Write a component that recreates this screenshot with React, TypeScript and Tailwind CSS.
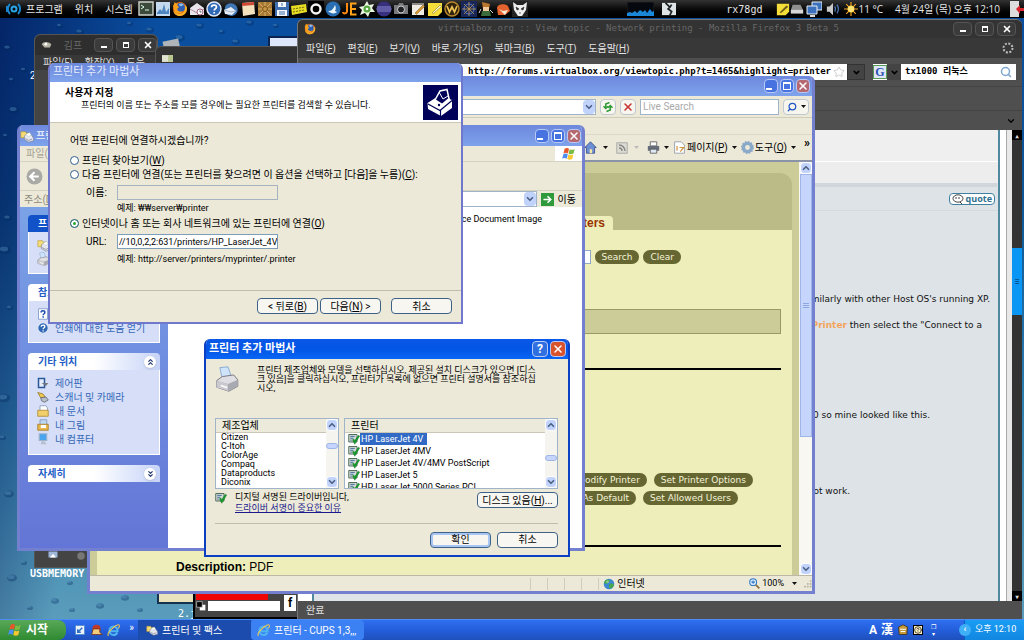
import type { ReactNode } from "react";
import { FiHelpCircle } from "react-icons/fi";
import { LuChevronDown, LuChevronUp, LuSearch, LuStar, LuX } from "react-icons/lu";

/* ---------- Small drawings ---------- */

function Svg({ size = 16, children }: { size?: number; children: ReactNode }) {
  return (
    <svg width={size} height={size} viewBox="0 0 16 16" className="shrink-0" aria-hidden="true">
      {children}
    </svg>
  );
}

/** Solid drop-down triangle used on the toolbars. */
const Caret = ({ dim = false }: { dim?: boolean }) => (
  <svg width="5" height="3" viewBox="0 0 5 3" className="shrink-0" aria-hidden="true">
    <path d="M0 0h5L2.500 3z" fill={dim ? "#bbb" : "#111"} />
  </svg>
);

const FirefoxIcon = ({ size = 16 }: { size?: number }) => (
  <Svg size={size}>
    <circle cx="8" cy="8" r="7" fill="#e8680e" />
    <circle cx="8.500" cy="6.500" r="4.600" fill="#2f5fb5" />
    <path d="M7 3c2-1 4-.5 5 1-1.500 0-2 1-3 1.200S7 4.500 7 3z" fill="#8fc0ee" />
    <path d="M1 5c1-2 1.500-3 1.500-4 1 1 2 1.500 3.500 1.500C5 4 5.500 5 7 6c-1 1-2 1.500-1.500 3S9 11 11 10c-1.500 3-6 3.500-8.500 1z" fill="#f7a01c" />
    <path d="M14.800 6c1 5-3 9-7 9C4 15 2 12.500 1.300 10c3 4 9 4 11 0 1-2 .8-4 .2-6z" fill="#f5b52a" />
  </Svg>
);

const IeIcon = ({ size = 14 }: { size?: number }) => (
  <Svg size={size}>
    <path d="M3.500 9h9.500c.3-3.500-2-6-5-6S3 5.400 3 8.200s2 5.300 5 5.300c2 0 3.800-1 4.600-3" fill="none" stroke="#4fb4f2" strokeWidth="2.600" />
    <path d="M2 14.500c-2-1 0-5 4-8.500s8-5.600 9-4.500-.5 3-1 4" fill="none" stroke="#f2c84b" strokeWidth="1.300" />
  </Svg>
);

const FlagIcon = ({ size = 14 }: { size?: number }) => (
  <Svg size={size}>
    <path d="M3 2c2-1.300 3.600-1 5 0L6.800 7.300C5.300 6.400 3.700 6.400 1.700 7.400z" fill="#e8562a" />
    <path d="M8.700 2.500c1.500 1 3.300 1 5.800-.3L13.200 7.500c-2 1.200-4 1.200-5.700.2z" fill="#7cbb42" />
    <path d="M1.500 8.300c2-1 3.600-1 5.100-.1L5.400 13.300c-1.500-.9-3.300-.8-5.200.2z" fill="#4b8df0" />
    <path d="M7.300 8.700c1.800 1 3.600 1 5.700-.1l-1.300 5.200c-2 1.100-4 1.100-5.600 0z" fill="#f7c82f" />
  </Svg>
);

const PrinterIcon = ({ size = 24 }: { size?: number }) => (
  <Svg size={size}>
    <path d="M3 1l5-.5 2 6L4.500 8z" fill="#cfe4fb" stroke="#7ba0cf" strokeWidth=".5" />
    <path d="M1 9l3.500-2.500 7-1 2.500 3v4L8.500 15.500 1 13z" fill="#dfdfe3" stroke="#77777f" strokeWidth=".6" />
    <path d="M1 9l7 2 6-2.500v4L8.500 15.500 1 13z" fill="#a9a9b1" />
    <path d="M1 9l7 2v4.300L1 13z" fill="#c9c9cf" />
    <path d="M3.500 12l4 1.300" stroke="#fafafa" fill="none" />
  </Svg>
);

const PrinterFolderIcon = ({ size = 14 }: { size?: number }) => (
  <Svg size={size}>
    <path d="M1 3h5l1 1.500h4V10H1z" fill="#f5dc75" stroke="#b58f22" strokeWidth=".6" />
    <path d="M5 8l2-2 6 .5 2.500 4v3L10 15l-5-3z" fill="#e6e7ee" stroke="#72778b" strokeWidth=".7" />
    <path d="M6 11l4 2 4-1.500" stroke="#8b90a3" fill="none" />
    <path d="M7 6l4-2 2 3-4 1.500z" fill="#fff" stroke="#8aa" strokeWidth=".4" />
  </Svg>
);

const SignedIcon = () => (
  <Svg size={12}>
    <path d="M1 2h11v10H1z" fill="#d5dad5" stroke="#4e6b57" strokeWidth="1.300" />
    <path d="M3 4.500h6M3 7h4M3 9.500h2" stroke="#3d6d9c" strokeWidth="1.300" />
    <path d="M6 9l3 6 6.500-11-1.500-1-5 7-1.500-2z" fill="#17a02f" stroke="#0b6a1c" strokeWidth=".6" />
  </Svg>
);

const GlobeIcon = ({ size = 12 }: { size?: number }) => (
  <Svg size={size}>
    <circle cx="8" cy="8" r="7" fill="#3d86d2" />
    <path d="M3 3c3-2 5-1 6 0S7 6 6 7 2 8 1.500 7zM9 8c2-1 5-1 5.500 1s-3 5-5 5-2-5-.5-6z" fill="#48a84c" />
    <circle cx="6" cy="5" r="2" fill="#fff" opacity=".35" />
  </Svg>
);

const HelpBall = ({ size = 14 }: { size?: number }) => (
  <Svg size={size}>
    <circle cx="8" cy="8" r="7" fill="#2f68b4" stroke="#dfe9f8" strokeWidth="1.500" />
    <path d="M5.500 6.300C5.500 3.300 10.500 3.400 10.500 6c0 1.800-2.300 1.600-2.300 3.600M8.200 11v1.600" stroke="#fff" strokeWidth="1.700" fill="none" />
  </Svg>
);

const HelpPage = () => (
  <Svg size={12}>
    <path d="M2 1h12v14H2z" fill="#fff" stroke="#6f8fc4" />
    <path d="M5.500 6C5.500 3 10.500 3 10.500 6c0 1.800-2.300 1.600-2.300 3.600M8.200 11v2" stroke="#1f4fae" strokeWidth="2" fill="none" />
  </Svg>
);

/* launchers in the top panel, in order */
const launchers: ReactNode[] = [
  <Svg key="term"><path d="M1 1h14v13H1z" fill="#3c4a3c" stroke="#cfd3cb" strokeWidth="1.400" /><path d="M3 4l3 2-3 2M7 9h4" stroke="#dfe" fill="none" /></Svg>,
  <Svg key="mon"><path d="M1 1h14v14H1z" fill="#c5daee" /><path d="M2 12l3-4 2 2 2-7 2 8 3-4v6H2z" fill="#4e87c0" /></Svg>,
  <FirefoxIcon key="ff" />,
  <Svg key="mail"><path d="M1 7l7-5 7 5v7H1z" fill="#e9e5ea" /><path d="M1 8l7 4 7-4" stroke="#b08fa0" fill="none" /><circle cx="11" cy="11" r="3" fill="#fff" stroke="#a05a80" /><path d="M11 9.500V11h1.500" stroke="#555" fill="none" /></Svg>,
  <HelpBall key="help" size={16} />,
  <Svg key="tb"><path d="M2 6c1-4 9-6 12 0 2 5-1 8-5 9-5 0-8-4-7-9z" fill="#4176b5" /><path d="M1 9l7-3 5 4-4 4-7-1z" fill="#e9eef5" /><path d="M1 9l7 2 5-1" stroke="#9fb4cc" fill="none" /></Svg>,
  <Svg key="note"><path d="M2 2l12-1 1 12-12 2z" fill="#f3e2bd" /><path d="M2 2l12-1v3L2 5z" fill="#cf4a35" /></Svg>,
  <Svg key="box"><path d="M1 1h14v14H1z" fill="#a87a35" /><path d="M2 2l12 12M14 2L2 14M8 1v14M1 8h14" stroke="#d9b266" /><circle cx="8" cy="8" r="2.500" fill="#c79646" stroke="#7d561d" /></Svg>,
  <Svg key="floppy"><path d="M1 1h14v14H1z" fill="#3f6fae" /><path d="M4 1h8v5H4zM3 9h10v6H3z" fill="#f4f7fb" /><path d="M8 2v3M5 11h6M5 13h6" stroke="#3f6fae" /></Svg>,
  <Svg key="easy"><path d="M0 5l15-2 1 8-15 3z" fill="#e9dc25" /><path d="M2 8l12-2M2 11l11-2" stroke="#6c6a10" strokeDasharray="2 1" /></Svg>,
  <Svg key="ring"><path d="M0 0h16v16H0z" fill="#000" /><circle cx="8" cy="8" r="4.500" stroke="#f4f4f4" strokeWidth="2.400" fill="none" /></Svg>,
  <Svg key="bird"><circle cx="8" cy="8" r="7.500" fill="#2a6fb3" /><path d="M3 10c3 0 5-1 7-6 1 2 1 4 0 6l2 1c-2 2-6 2-9-1z" fill="#eef5fb" /></Svg>,
  <Svg key="je"><path d="M5 2v8c0 3-4 3-4 1" stroke="#ff8a12" strokeWidth="2" fill="none" /><path d="M14.500 2.500H9v11h5.500M9 8h5" stroke="#ffa21a" strokeWidth="2" fill="none" /></Svg>,
  <Svg key="splat"><path d="M8 0l2 4 5-1-2 4 3 4-5 0-2 5-3-4-5 2 2-5-3-3 5-1z" fill="#e9f5df" /><circle cx="8" cy="8" r="3.500" fill="#54a83d" /><circle cx="8" cy="8" r="1.300" fill="#fff" /></Svg>,
  <Svg key="eclipse"><circle cx="8" cy="8" r="7.500" fill="#37307f" /><path d="M1 6h14M.5 8h15M1 10h14" stroke="#8d86cf" /></Svg>,
  <Svg key="cam"><path d="M1 4h4l1-2h4l1 2h4v9H1z" fill="#77797b" /><circle cx="8" cy="8.500" r="3.500" fill="#222" stroke="#cfd2d4" /></Svg>,
  <Svg key="edit"><path d="M2 2h12v12H2z" fill="#efece4" /><path d="M2 2h12v2H2z" fill="#8d8a83" /><path d="M5 12l8-8 1.500 1.500-8 8z" fill="#d99a35" stroke="#805a1f" strokeWidth=".5" /></Svg>,
  <Svg key="sticky"><path d="M1 2h14v9l-4 4H1z" fill="#f5de3a" /><path d="M5 12l8-8 1.500 1.500-8 7z" fill="#fff9d5" stroke="#a08b1d" strokeWidth=".7" /></Svg>,
  <Svg key="wow"><circle cx="8" cy="8" r="7" fill="#31230d" stroke="#b6862c" strokeWidth="1.500" /><path d="M3 5l2.500 6L8 6l2.500 5L13 5" stroke="#efc455" strokeWidth="1.700" fill="none" /></Svg>,
  <Svg key="sc"><path d="M0 0h16v16H0z" fill="#182658" /><circle cx="8" cy="8" r="5" fill="none" stroke="#5678c8" /><path d="M8 1v14M1 8h14M3 3l10 10M13 3L3 13" stroke="#c29a54" strokeWidth=".8" /></Svg>,
  <Svg key="dude"><path d="M4 1l8 2-1 5H5z" fill="#b9762e" /><path d="M5 6h6v4H5z" fill="#f2caa0" /><path d="M4 10h8l1 5H3z" fill="#3a6b3d" /><path d="M3 8l-2 4M12 9l3 3" stroke="#d9d9d9" /></Svg>,
  <Svg key="fox"><path d="M2 7c0-4 8-5 11-2l2 5-5 4H3z" fill="#e3622d" /><path d="M4 8l4 2 5-1-3 5z" fill="#f8e6d7" /></Svg>,
  <Svg key="mask"><path d="M0 0h16v16H0z" fill="#222" /><path d="M1 1l4 3h6l4-3-1 8-4 6H6L2 9z" fill="#eee" /><path d="M4 6l3 2-2 1zM12 6L9 8l2 1zM7 12h2" fill="#222" stroke="#222" strokeWidth=".6" /></Svg>,
];

/* ---------- Shared pieces ---------- */

/** Label with its access key underlined in brackets. */
const Key = ({ text, k, after = "" }: { text: string; k: string; after?: string }) => (
  <>
    {text}(<span className="underline">{k}</span>){after}
  </>
);

function CaptionButton({ kind, active = false }: { kind: "min" | "max" | "close" | "help"; active?: boolean }) {
  const color = kind === "close" ? (active ? "bg-[#d9532c]" : "bg-[#b5686f]") : active ? "bg-[#2f6fe0]" : "bg-[#4673e0]";
  return (
    <button
      type="button"
      aria-label={kind}
      className={`${color} ${active ? "h-4 w-4" : "h-3.5 w-3.5"} flex items-center justify-center rounded-sm border border-[#b9c9f5] text-white`}
    >
      {kind === "min" && <span className="mt-1.5 mr-1 h-0.5 w-1.5 bg-white" />}
      {kind === "max" && <span className="h-2 w-2 border border-t-2 border-white" />}
      {kind === "close" && <LuX size={12} strokeWidth={3} />}
      {kind === "help" && <span className="text-xs leading-none font-bold">?</span>}
    </button>
  );
}

function DarkCaptionButtons() {
  return (
    <div className="flex gap-[3px] text-white">
      <button type="button" aria-label="min" className="flex h-3.5 w-[19px] items-center justify-center rounded-sm border border-[#555] bg-[#3b3b3b]">
        <span className="mt-1 h-0.5 w-1.5 bg-white" />
      </button>
      <button type="button" aria-label="max" className="flex h-3.5 w-[19px] items-center justify-center rounded-sm border border-[#555] bg-[#3b3b3b]">
        <span className="h-1.5 w-1.5 border border-t-2 border-white" />
      </button>
      <button type="button" aria-label="close" className="flex h-3.5 w-[19px] items-center justify-center rounded-sm border border-[#555] bg-[#3b3b3b]">
        <LuX size={10} strokeWidth={4} />
      </button>
    </div>
  );
}

const ComboArrow = () => (
  <button type="button" aria-label="open" className="flex h-full w-3 items-center justify-center rounded-sm bg-[#c1d3fb] text-[#4d6185]">
    <LuChevronDown size={10} strokeWidth={4} />
  </button>
);

const ScrollArrow = ({ up = false }: { up?: boolean }) => (
  <button type="button" aria-label="scroll" className="flex h-3 w-3 shrink-0 items-center justify-center rounded-sm border border-white bg-[#c1d3fb] text-[#4d6185]">
    {up ? <LuChevronUp size={10} strokeWidth={4} /> : <LuChevronDown size={10} strokeWidth={4} />}
  </button>
);

const XpButton = ({ children, wide = "w-[61px]", focus = false }: { children: ReactNode; wide?: string; focus?: boolean }) => (
  <button
    type="button"
    className={`${wide} ${focus ? "shadow-[inset_0_0_0_2px_#a9c5f2]" : ""} flex h-4 items-center justify-center rounded-sm border border-[#3d6288] bg-[#f7f6f1] whitespace-pre`}
  >
    {children}
  </button>
);

/* ---------- Windows ---------- */

function TopPanel() {
  return (
    <header className="flex h-[18px] shrink-0 items-center overflow-hidden bg-linear-to-b from-[#333] via-[#0b0b0b] to-black font-['Open_Sans','Noto_Sans_CJK_KR',sans-serif] text-[10px] whitespace-nowrap text-[#e6e6e6]">
      <nav className="flex w-[138px] shrink-0 items-center pl-1.5">
        <Svg>
          <circle cx="8" cy="8" r="2.500" fill="none" stroke="#2aa5e8" strokeWidth="2" />
          <path d="M4 3a7 7 0 000 10M12 3a7 7 0 010 10M1 5v6" stroke="#1a86cf" strokeWidth="2" fill="none" />
        </Svg>
        <a href="#programs" className="ml-1">프로그램</a>
        <a href="#places" className="ml-3">위치</a>
        <a href="#system" className="ml-3">시스템</a>
      </nav>
      <div className="flex gap-px">{launchers}</div>
      <div className="ml-auto flex items-center">
        <svg width="27" height="14" viewBox="0 0 27 14" className="mr-2">
          <path d="M0 0h27v14H0z" fill="#05080f" stroke="#222" />
          <path d="M0 14v-3l3-1 2 1 3-2 2 2 3-3 3 2 2-2 2 3 3-4 2 3 2-1v5z" fill="#1b87d8" />
        </svg>
        <Svg size={14}><path d="M0 1h16v14H0z" fill="#dfe5e6" /><path d="M4 1l5 5-2 2 4 3-2 4M11 3l-2 3" stroke="#1d2225" strokeWidth="2" fill="none" /></Svg>
        <span className="mr-3.5 ml-[50px] font-['DejaVu_Sans_Mono',monospace]">rx78gd</span>
        <Svg size={14}><path d="M1 2h14v9l-4 4H1z" fill="#f5de3a" /><path d="M4 12l8-8 2 1.500-8 7z" fill="#6a5c17" /></Svg>
        <Svg size={14}><path d="M3 3h9l3 6v4H1V9z" fill="#8f8f8f" /><path d="M1 9h14v4H1z" fill="#d6d6d6" /></Svg>
        <span className="w-0.5" />
        <Svg><path d="M6 1h10v8H6z" fill="#3c72bd" stroke="#e9eef5" /><path d="M1 5h10v8H1z" fill="#3c72bd" stroke="#e9eef5" /><path d="M4 15h5" stroke="#ddd" strokeWidth="2" /></Svg>
        <span className="w-1" />
        <Svg size={14}><path d="M1 5h3l4-4v14l-4-4H1z" fill="#c9c9c9" /><path d="M10 5c1 2 1 4 0 6M12.500 3c2 3 2 7 0 10" stroke="#4a76b3" strokeWidth="1.500" fill="none" /></Svg>
        <span className="w-1" />
        <Svg size={14}><circle cx="8" cy="8" r="4" fill="#ffd94a" /><path d="M8 0v16M0 8h16M2.500 2.500l11 11M13.500 2.500l-11 11" stroke="#f7a823" strokeWidth="1.300" /><circle cx="8" cy="8" r="3.500" fill="#ffe476" /></Svg>
        <span className="mr-3">11 °C</span>
        <time>4월 24일 (목) 오후 12:10</time>
        <span className="w-2" />
        <Svg><path d="M2 0h9v16H2z" fill="#ddd" /><path d="M8 8l4-4v3h4v3h-4v3z" fill="#d8262e" /></Svg>
      </div>
    </header>
  );
}

function FirefoxWindow() {
  return (
    <section className="absolute top-px right-0.5 bottom-0 left-[297px] flex flex-col overflow-hidden rounded-t-md border-t border-l border-[#777] bg-[#4f4f4f] font-['DejaVu_Sans_Mono','Noto_Sans_CJK_KR',monospace] text-[10px] text-[#e4e4e4]">
      <div className="flex h-[18px] shrink-0 items-center bg-[#333] pr-1.5 pl-1.5">
        <FirefoxIcon size={12} />
        <h2 className="flex-1 truncate pl-2 text-center text-[9px] text-[#666]">virtualbox.org :: View topic - Network printing - Mozilla Firefox 3 Beta 5</h2>
        <DarkCaptionButtons />
      </div>
      <nav className="flex h-5 shrink-0 items-center gap-3 bg-[#383838] px-2 font-['Open_Sans','Noto_Sans_CJK_KR',sans-serif] whitespace-nowrap">
        <span><Key text="파일" k="F" /></span>
        <span><Key text="편집" k="E" /></span>
        <span><Key text="보기" k="V" /></span>
        <span><Key text="바로 가기" k="S" /></span>
        <span><Key text="북마크" k="B" /></span>
        <span><Key text="도구" k="T" /></span>
        <span><Key text="도움말" k="H" /></span>
        <svg width="12" height="12" viewBox="0 0 12 12" className="ml-auto">
          <circle cx="6" cy="6" r="4.500" fill="none" stroke="#bbb" strokeWidth="2" strokeDasharray="2 1.500" />
        </svg>
      </nav>
      <div className="flex h-7 shrink-0 items-center pr-1.5">
        <div className="ml-40 flex h-4 flex-1 items-center bg-white">
          <input
            aria-label="URL"
            defaultValue="http://forums.virtualbox.org/viewtopic.php?t=1465&highlight=printer"
            className="min-w-0 flex-1 pl-2.5 text-[9px] font-bold text-black"
          />
          <LuStar size={12} className="mr-0.5 text-[#ccc]" />
        </div>
        <button type="button" aria-label="history" className="mr-2 flex h-4 w-[18px] items-center justify-center border border-[#333] bg-[#444] text-black">
          <LuChevronDown size={9} strokeWidth={4} />
        </button>
        <div className="flex h-4 w-[143px] items-center bg-white">
          <span className="flex h-3.5 w-3.5 items-center justify-center border border-[#5a9a5a] bg-[#dfe7f7] font-['Liberation_Serif',serif] text-xs font-bold text-[#2b52b5]">G</span>
          <button type="button" aria-label="engine" className="flex h-4 w-3.5 items-center justify-center bg-[#444] text-black">
            <LuChevronDown size={9} strokeWidth={4} />
          </button>
          <input aria-label="search" defaultValue="tx1000 리눅스" className="min-w-0 flex-1 pl-1 text-[9px] font-bold text-black" />
          <LuSearch size={12} strokeWidth={3} className="mr-1 text-[#7fa6cf]" />
        </div>
      </div>
      <div className="h-6 shrink-0 border-t border-[#444]" />
      <div className="flex h-5 shrink-0 items-center justify-end border-t border-[#444] pr-1.5 text-black">
        <LuChevronDown size={10} strokeWidth={3} />
      </div>
      <div className="flex min-h-0 flex-1 bg-white">
        <article className="ml-3.5 flex flex-1 flex-col border-x-2 border-[#5088a0] bg-[#dee3e7] font-['DejaVu_Sans',sans-serif] text-[9px] text-[#111]">
          <div className="h-8 border-b border-white bg-[#efefef]" />
          <div className="h-[21px] bg-[#ededed]" />
          <div className="mr-px h-1 bg-[#d0d6dc]" />
          <div className="flex h-6 items-center justify-end border-b border-[#d3d9dd] pr-[3px]">
            <button type="button" className="flex h-3 items-center gap-0.5 rounded-sm border border-[#3f7f9f] bg-white px-0.5 font-['Open_Sans',sans-serif] text-[9px] leading-[10px] font-bold text-[#2f6f8f]">
              <svg width="12" height="10" viewBox="0 0 12 10" aria-hidden="true">
                <ellipse cx="6" cy="4.500" rx="5" ry="3.700" fill="#fff" stroke="#444" />
                <path d="M4 3v2M7 3v2M8 8l2 2" stroke="#444" />
              </svg>
              quote
            </button>
          </div>
          <div className="flex flex-col items-end text-right leading-[12px] whitespace-nowrap">
            <p className="mt-[82px] pr-2">This should work similarly with other Host OS's running XP.</p>
            <p className="mt-3.5 pr-4"><b className="text-[#f2a45c]">Printer</b> then select the "Connect to a</p>
            <p className="mt-[78px] pr-[68px]">0 so mine looked like this.</p>
            <p className="mt-16 pr-[148px]">not work.</p>
          </div>
        </article>
        <div className="ml-1.5 w-1.5 border-l border-[#aaa] bg-[#e8e8e8]" />
        <div className="flex w-2.5 flex-col bg-[#333] text-[#ddd]">
          <span className="flex h-2.5 items-center justify-center bg-black text-[6px]">▲</span>
          <div className="mt-[108px] flex h-[67px] flex-col items-center justify-center gap-px bg-[#0a96f5]">
            <span className="h-px w-1 bg-[#06569a]" />
            <span className="h-px w-1 bg-[#06569a]" />
            <span className="h-px w-1 bg-[#06569a]" />
          </div>
          <span className="mt-auto flex h-2.5 items-center justify-center bg-black text-[6px]">▼</span>
        </div>
      </div>
      <footer className="flex h-[18px] shrink-0 items-center pl-2">완료</footer>
    </section>
  );
}

const OliveButton = ({ children }: { children: ReactNode }) => (
  <button type="button" className="h-3.5 rounded-full bg-[#666633] px-[7px] text-[9px] leading-[14px] text-[#f4f4d8]">
    {children}
  </button>
);

function IeWindow() {
  return (
    <section className="absolute top-[58px] left-[87px] flex h-[518px] w-[728px] flex-col overflow-hidden rounded-t-md border-x-3 border-b-3 border-[#7380d0] bg-[#ece9d8] text-[10px] whitespace-nowrap">
      <div className="flex h-5 shrink-0 items-center justify-end gap-0.5 bg-linear-to-b from-[#6d88dc] to-[#7ea3ec] pr-0.5">
        <CaptionButton kind="min" />
        <CaptionButton kind="max" />
        <CaptionButton kind="close" />
      </div>
      <div className="flex h-[22px] shrink-0 items-center gap-1 border-b border-[#cfccba] pr-[3px]">
        <div className="flex h-4 flex-1 items-center justify-end border border-[#9fb4c8] bg-white">
          <ComboArrow />
        </div>
        <button type="button" aria-label="refresh" className="flex h-4 w-4 items-center justify-center rounded-sm border border-[#bfc8d0] bg-[#f6f5ee]">
          <Svg size={12}><path d="M10 2L5 4v5M2 7l3 3 3-3M6 14l5-2V7M8 9l3-3 3 3" fill="none" stroke="#2f9a36" strokeWidth="2" /></Svg>
        </button>
        <button type="button" aria-label="stop" className="flex h-4 w-4 items-center justify-center rounded-sm border border-[#bfc8d0] bg-[#f6f5ee] text-[#c73232]">
          <LuX size={12} strokeWidth={3} />
        </button>
        <input aria-label="Live Search" placeholder="Live Search" className="h-4 w-[139px] border border-[#9fb4c8] bg-white pl-0.5 placeholder:text-[#aaa]" />
        <button type="button" aria-label="search" className="flex h-4 w-[26px] items-center justify-center gap-1 rounded-sm border border-[#bfc8d0] bg-[#f6f5ee] text-[#2258c4]">
          <LuSearch size={10} strokeWidth={3} className="-scale-x-100" />
          <Caret />
        </button>
      </div>
      <div className="h-[17px] shrink-0 border-b border-[#dcd9c8]" />
      <div className="flex h-[27px] shrink-0 items-center justify-end border-b-2 border-[#8b93a8] pr-0.5">
        <Svg size={13}><path d="M1 8l7-7 7 7h-2v7H3V8z" fill="#6f8fd4" stroke="#324a86" /><path d="M7 10h3v5H7z" fill="#f5e7a5" /></Svg>
        <span className="mr-2 ml-1.5"><Caret /></span>
        <Svg size={12}><path d="M1 1h14v14H1z" fill="#dcdcd2" stroke="#999" /><path d="M4 8a4 4 0 014 4M4 4a8 8 0 018 8" stroke="#888" strokeWidth="2" fill="none" /></Svg>
        <span className="mr-2 ml-1.5"><Caret dim /></span>
        <Svg size={13}><path d="M4 1h8v5H4z" fill="#fff" stroke="#555" /><path d="M1 6h14v6H1z" fill="#666e7c" /><path d="M4 10h8v5H4z" fill="#dfe8f5" stroke="#555" /></Svg>
        <span className="mr-1 ml-1"><Caret /></span>
        <Svg size={13}><path d="M2 1h8l4 4v10H2z" fill="#fff" stroke="#8b94a5" /><path d="M5 6v6M8 8h5l-4 5" stroke="#cf9640" strokeWidth="1.500" fill="none" /></Svg>
        <span className="ml-px"><Key text="페이지" k="P" /></span>
        <span className="mr-1 ml-1"><Caret /></span>
        <Svg size={13}><circle cx="8" cy="8" r="5" fill="none" stroke="#8aa9c9" strokeWidth="4" /><circle cx="8" cy="8" r="7" fill="none" stroke="#8aa9c9" strokeWidth="2" strokeDasharray="2 1.600" /></Svg>
        <span className="ml-px"><Key text="도구" k="O" /></span>
        <span className="mr-2 ml-1"><Caret /></span>
        <span className="self-start text-[12px] leading-4 font-bold">»</span>
      </div>
      <div className="flex min-h-0 flex-1 font-['DejaVu_Sans',sans-serif]">
        <div className="flex flex-1 flex-col bg-[#cccc99] pr-[7px] pl-[7px] pt-[11px]">
          <div className="flex h-[57px] shrink-0 items-end justify-end rounded-tr-xl bg-[#bbbb88] pr-[179px]">
            <h3 className="rounded-tr-sm bg-[#eeeebb] px-2 font-['Liberation_Sans',sans-serif] text-[12px] leading-[14px] font-bold text-[#993300]">Printers</h3>
          </div>
          <div className="flex flex-1 flex-col bg-[#eeeebb]">
            <div className="mt-5 flex items-center justify-end gap-1 pr-[111px]">
              <input aria-label="query" className="h-3.5 w-40 border border-[#8fa8c8] bg-white" />
              <OliveButton>Search</OliveButton>
              <OliveButton>Clear</OliveButton>
            </div>
            <div className="mt-[45px] mr-[11px] h-[25px] border border-[#999966] bg-[#cccc99]" />
            <hr className="mt-[34px] mr-[11px] border-t-2 border-black" />
            <div className="mt-[103px] flex justify-end gap-[7px] pr-[39px]">
              <OliveButton>Modify Printer</OliveButton>
              <OliveButton>Set Printer Options</OliveButton>
            </div>
            <div className="mt-1 flex justify-end gap-[7px] pr-[54px]">
              <OliveButton>Set As Default</OliveButton>
              <OliveButton>Set Allowed Users</OliveButton>
            </div>
            <hr className="mt-10 mr-[11px] border-t-2 border-black" />
            <p className="mt-3 pl-[79px] font-['Liberation_Sans',sans-serif] text-[12px] leading-4"><b>Description:</b> PDF</p>
          </div>
        </div>
        <div className="flex w-[13px] flex-col items-center bg-[#f8f7f2]">
          <ScrollArrow up />
          <div className="flex h-[263px] w-3 flex-col items-center justify-center gap-px border border-[#9fb5e8] bg-[#c5d5fc]">
            <span className="h-px w-1.5 bg-[#8ca8e0]" />
            <span className="h-px w-1.5 bg-[#8ca8e0]" />
            <span className="h-px w-1.5 bg-[#8ca8e0]" />
          </div>
          <div className="flex-1" />
          <ScrollArrow />
        </div>
      </div>
      <footer className="flex h-4 shrink-0 items-center justify-end border-t border-[#bbb8a8]">
        <span className="mr-4 h-3 w-px bg-[#d0cdbc]" />
        <span className="mr-4 h-3 w-px bg-[#d0cdbc]" />
        <span className="mr-4 h-3 w-px bg-[#d0cdbc]" />
        <span className="mr-4 h-3 w-px bg-[#d0cdbc]" />
        <span className="mr-1 h-3 w-px bg-[#d0cdbc]" />
        <GlobeIcon />
        <span className="ml-0.5 w-[132px]">인터넷</span>
        <Svg size={11}><circle cx="6" cy="6" r="5" fill="#d5e8fb" stroke="#2f78c4" strokeWidth="1.500" /><path d="M3.500 6h5M6 3.500v5" stroke="#2f78c4" strokeWidth="1.500" /><path d="M10 10l5 5" stroke="#8a6d3a" strokeWidth="2.500" /></Svg>
        <span className="ml-0.5 text-[9px]">100%</span>
        <span className="mr-1.5 ml-2"><Caret /></span>
        <Svg size={9}><path d="M12 2h3v3h-3zM12 7h3v3h-3zM12 12h3v3h-3zM7 7h3v3H7zM7 12h3v3H7zM2 12h3v3H2z" fill="#b8b4a2" /></Svg>
      </footer>
    </section>
  );
}

function SidePanel({ title, dark = false, open = true, height = "", children }: { title: string; dark?: boolean; open?: boolean; height?: string; children?: ReactNode }) {
  return (
    <div>
      <h3 className={`${dark ? "bg-[#1152c8] text-white" : "bg-linear-to-r from-white via-white to-[#c6d3f7] text-[#215dc6]"} flex h-[17px] items-center justify-between rounded-t-sm pr-1 pl-2.5 font-bold`}>
        {title}
        <button type="button" aria-label="toggle" className="flex h-3 w-3 flex-col items-center justify-center rounded-full bg-white text-[#22386f] shadow-sm">
          {open ? <LuChevronUp size={7} strokeWidth={4} /> : <LuChevronDown size={7} strokeWidth={4} />}
          {open ? <LuChevronUp size={7} strokeWidth={4} className="-mt-1" /> : <LuChevronDown size={7} strokeWidth={4} className="-mt-1" />}
        </button>
      </h3>
      {open && <div className={`${height} border border-t-0 border-white bg-[#d6dff7] px-2 pt-1.5 text-[#3567b8]`}>{children}</div>}
    </div>
  );
}

const places: { name: string; icon: ReactNode }[] = [
  { name: "제어판", icon: <Svg size={12}><path d="M2 2h8v12H2z" fill="#e4edf9" stroke="#285a9b" strokeWidth="2" /><path d="M6 8h9l-3 4z" fill="#72777f" /></Svg> },
  { name: "스캐너 및 카메라", icon: <Svg size={12}><path d="M1 2l7 2 3 4-6 1z" fill="#f2cb50" stroke="#8d6f1d" /><path d="M5 9l7-1 3 4-5 3-4-2z" fill="#b9bec8" stroke="#5b606c" /></Svg> },
  { name: "내 문서", icon: <Svg size={12}><path d="M4 1h8l2 3v6H4z" fill="#fff" stroke="#7b8fb5" /><path d="M1 7h14v8H1z" fill="#f1cf6b" stroke="#a88327" /></Svg> },
  { name: "내 그림", icon: <Svg size={12}><path d="M4 1h9v8H4z" fill="#bcd9f4" stroke="#7b8fb5" /><path d="M1 7h14v8H1z" fill="#e8b74a" stroke="#a07322" /><path d="M5 8h7v4H5z" fill="#fff" /></Svg> },
  { name: "내 컴퓨터", icon: <Svg size={12}><path d="M3 1h10v9H3z" fill="#4aa5ee" stroke="#9fb2cc" strokeWidth="1.500" /><path d="M6 11h4l3 4H5z" fill="#b5bfd0" /></Svg> },
];

function PrintersFolder() {
  return (
    <section className="absolute top-[107px] left-[17px] flex h-[426px] w-[568px] flex-col overflow-hidden rounded-t-md border-x-3 border-b-3 border-[#7380d0] bg-[#ece9d8] text-[10px] whitespace-nowrap">
      <div className="flex h-[21px] shrink-0 items-center gap-0.5 bg-linear-to-b from-[#6d88dc] to-[#7ea3ec] pr-px">
        <PrinterFolderIcon />
        <h2 className="flex-1 font-bold text-[#dfe7fb]">프린터 및 팩스</h2>
        <CaptionButton kind="min" />
        <CaptionButton kind="max" />
        <CaptionButton kind="close" />
      </div>
      <div className="flex h-4 shrink-0 items-center justify-between border-b border-[#d5d2c2] pl-1.5 text-[#a5a294]">
        <span><Key text="파일" k="F" /></span>
        <span className="flex h-full w-[27px] items-center justify-center bg-white"><FlagIcon /></span>
      </div>
      <div className="flex h-[29px] shrink-0 items-center border-b border-[#d5d2c2] pl-1.5">
        <Svg size={17}><circle cx="8" cy="8" r="7.500" fill="#a9a9a5" /><path d="M8 4L4 8l4 4M4 8h8" stroke="#fff" strokeWidth="2" fill="none" /></Svg>
      </div>
      <div className="flex h-4 shrink-0 items-center gap-1 pr-1.5 pl-1 text-[#8f8c80]">
        <span><Key text="주소" k="D" /></span>
        <div className="flex h-4 flex-1 items-center justify-end border border-[#9fb4c8] bg-white">
          <ComboArrow />
        </div>
        <Svg size={13}><path d="M0 0h16v16H0z" fill="#2f9a3c" /><path d="M3 8h9M8 4l4 4-4 4" stroke="#fff" strokeWidth="2" fill="none" /></Svg>
        <span className="text-black">이동</span>
      </div>
      <div className="flex min-h-0 flex-1 bg-white">
        <aside className="flex w-[148px] shrink-0 flex-col gap-2.5 bg-linear-to-b from-[#7ba2e7] to-[#6375d6] px-2 pt-2">
          <SidePanel title="프린터 작업" dark height="h-[42px]">
            <PrinterFolderIcon size={14} />
            <PrinterIcon size={14} />
          </SidePanel>
          <SidePanel title="참고 항목" height="h-[42px]">
            <a href="#trouble" className="flex h-3.5 items-center gap-1.5"><HelpPage />문제 해결</a>
            <a href="#help" className="flex h-3.5 items-center gap-1.5"><HelpBall size={12} />인쇄에 대한 도움 얻기</a>
          </SidePanel>
          <SidePanel title="기타 위치" height="h-[85px]">
            {places.map((p) => (
              <a key={p.name} href="#place" className="flex h-3.5 items-center gap-1.5">
                {p.icon}
                {p.name}
              </a>
            ))}
          </SidePanel>
          <SidePanel title="자세히" open={false} />
        </aside>
        <p className="flex-1 pt-1 pr-10 text-right text-[9px] leading-4">Microsoft Office Document Image</p>
      </div>
    </section>
  );
}

const Radio = ({ id, checked = false, children }: { id: string; checked?: boolean; children: ReactNode }) => (
  <div className="flex h-3.5 items-center gap-[3px]">
    <input
      type="radio"
      id={id}
      name="target"
      defaultChecked={checked}
      className="h-[9px] w-[9px] appearance-none rounded-full border border-[#31608f] bg-white checked:bg-[#28a428] checked:shadow-[inset_0_0_0_2px_white]"
    />
    <label htmlFor={id}>{children}</label>
  </div>
);

function ConnectWizard() {
  return (
    <section className="absolute top-[45px] left-12 flex h-[261px] w-[415px] flex-col overflow-hidden rounded-t-md border-x-2 border-b-2 border-[#6f78cc] bg-[#ece9d8] text-[10px] whitespace-nowrap">
      <h2 className="flex h-[19px] shrink-0 items-center bg-linear-to-b from-[#6d88dc] to-[#7ea3ec] pl-[3px] text-[11px] text-[#e3eafc]">프린터 추가 마법사</h2>
      <div className="flex h-[41px] shrink-0 items-center justify-between border-b border-[#c9c6b5] bg-white pr-[3px] pl-[15px] leading-3">
        <div className="pb-1.5">
          <h3 className="font-bold">사용자 지정</h3>
          <p className="pl-4 text-[9px]">프린터의 이름 또는 주소를 모를 경우에는 필요한 프린터를 검색할 수 있습니다.</p>
        </div>
        <svg width="35" height="35" viewBox="0 0 35 35">
          <path d="M0 0h35v35H0z" fill="#000058" />
          <path d="M4.500 18L14 12l4 6 4-6 7 3v8L18 31 5 24z" fill="#fff" />
          <path d="M5 19l12 6.500 12-10M17.500 25.500V31" stroke="#000058" strokeWidth="1.200" fill="none" />
          <path d="M12 15l5-9 7-1.500 2 9-7 6z" fill="#000058" stroke="#fff" strokeWidth="1.500" />
          <path d="M16 7l4 7 5-3" stroke="#fff" strokeWidth="1" fill="none" />
          <circle cx="16" cy="20" r="1.200" fill="#000058" />
        </svg>
      </div>
      <form className="flex flex-1 flex-col px-5 pt-2.5">
        <p className="mb-1 leading-4">어떤 프린터에 연결하시겠습니까?</p>
        <Radio id="browse"><Key text="프린터 찾아보기" k="W" /></Radio>
        <Radio id="named"><Key text="다음 프린터에 연결(또는 프린터를 찾으려면 이 옵션을 선택하고 [다음]을 누름)" k="C" after=":" /></Radio>
        <div className="mt-1 flex items-center pl-4">
          <label htmlFor="name" className="w-[31px]">이름:</label>
          <input id="name" disabled className="h-[15px] w-[161px] border border-[#a5b3c0]" />
        </div>
        <p className="pl-[47px] text-[9px] leading-4">예제: ₩₩server₩printer</p>
        <Radio id="net" checked><Key text="인터넷이나 홈 또는 회사 네트워크에 있는 프린터에 연결" k="O" /></Radio>
        <div className="mt-1 flex items-center pl-4">
          <label htmlFor="url" className="w-[31px]">URL:</label>
          <input id="url" defaultValue="//10,0,2,2:631/printers/HP_LaserJet_4V" className="h-[15px] w-[161px] border border-[#7f9db9] bg-white pl-px text-[9px]" />
        </div>
        <p className="mt-0.5 pl-[47px] text-[9px] leading-4">예제: http://server/printers/myprinter/.printer</p>
      </form>
      <div className="flex h-8 shrink-0 items-center justify-end gap-0.5 border-t border-[#c0bdae] pr-[9px] pb-px">
        <XpButton><Key text="< 뒤로" k="B" /></XpButton>
        <XpButton><Key text="다음" k="N" after=" >" /></XpButton>
        <span className="w-1.5" />
        <XpButton>취소</XpButton>
      </div>
    </section>
  );
}

const vendors = ["Citizen", "C-Itoh", "ColorAge", "Compaq", "Dataproducts", "Diconix"];
const printers = ["HP LaserJet 4V", "HP LaserJet 4MV", "HP LaserJet 4V/4MV PostScript", "HP LaserJet 5", "HP LaserJet 5000 Series PCL"];

function ListBox({ title, thumb, className, children }: { title: string; thumb: string; className: string; children: ReactNode }) {
  return (
    <div className={`${className} flex h-[71px] border border-[#9fb4c8] bg-white`}>
      <div className="min-w-0 flex-1 overflow-hidden">
        <h3 className="h-3.5 border-b border-[#cbc7b8] bg-[#ebeadb] pl-1.5 leading-[14px]">{title}</h3>
        {children}
      </div>
      <div className="flex w-3 flex-col bg-[#f5f4ee]">
        <ScrollArrow up />
        <span className={`${thumb} h-1.5 rounded-sm border border-[#9fb5e8] bg-[#c5d5fc]`} />
        <span className="flex-1" />
        <ScrollArrow />
      </div>
    </div>
  );
}

function ModelWizard() {
  return (
    <section className="absolute top-[321px] left-[204px] flex h-[218px] w-[366px] flex-col overflow-hidden rounded-t-md border-x-2 border-b-2 border-[#0b3fc4] bg-[#ece9d8] text-[10px] whitespace-nowrap">
      <div className="flex h-5 shrink-0 items-center justify-between bg-linear-to-b from-[#0a58e8] via-[#0355e5] to-[#0a66f5] pr-0.5 pl-[3px]">
        <h2 className="text-[11px] font-bold text-white">프린터 추가 마법사</h2>
        <div className="flex gap-0.5">
          <CaptionButton kind="help" active />
          <CaptionButton kind="close" active />
        </div>
      </div>
      <div className="flex flex-1 flex-col pr-2.5 pl-[9px]">
        <div className="flex h-[59px] gap-4 pt-[7px]">
          <PrinterIcon size={26} />
          <p className="text-[9px] leading-[9px]">
            프린터 제조업체와 모델을 선택하십시오, 제공된 설치 디스크가 있으면 [디스
            <br />크 있음]을 클릭하십시오, 프린터가 목록에 없으면 프린터 설명서를 참조하십
            <br />시오,
          </p>
        </div>
        <div className="flex gap-[5px]">
          <ListBox title="제조업체" thumb="mt-3" className="w-[124px]">
            <ul className="pl-[5px] text-[9px] leading-[9px]">
              {vendors.map((v) => <li key={v}>{v}</li>)}
            </ul>
          </ListBox>
          <ListBox title="프린터" thumb="mt-6" className="flex-1">
            <ul className="pl-[3px] text-[9px]">
              {printers.map((p, i) => (
                <li key={p} className="flex h-3 items-center">
                  <SignedIcon />
                  <span className={i === 0 ? "bg-[#316ac5] pr-1 pl-px leading-3 text-white" : "pl-px leading-3"}>{p}</span>
                </li>
              ))}
            </ul>
          </ListBox>
        </div>
        <div className="mt-[3px] flex h-[31px] gap-2">
          <SignedIcon />
          <div className="flex-1 text-[9px] leading-[11px]">
            <p>디지털 서명된 드라이버입니다,</p>
            <a href="#signing" className="text-[#1a1a8c] underline">드라이버 서명이 중요한 이유</a>
          </div>
          <XpButton wide="w-[81px]"><Key text="디스크 있음" k="H" after="..." /></XpButton>
        </div>
        <div className="flex flex-1 items-center justify-end gap-1.5 border-t border-[#c0bdae]">
          <XpButton focus>확인</XpButton>
          <XpButton>취소</XpButton>
        </div>
      </div>
    </section>
  );
}

function Wallpaper() {
  const drops = [
    [8, 30, 4], [24, 52, 3], [14, 92, 5], [6, 118, 3], [12, 62, 3], [8, 200, 4], [5, 232, 6], [10, 290, 3], [4, 380, 6], [9, 476, 5], [3, 420, 3],
    [60, 8, 3], [80, 14, 4], [130, 6, 3], [150, 12, 4], [180, 20, 5], [200, 8, 4], [222, 14, 3], [250, 5, 4], [236, 24, 4], [276, 8, 3],
    [12, 560, 5], [30, 590, 3], [55, 583, 4], [72, 592, 3], [100, 588, 4], [125, 580, 4], [140, 592, 3], [24, 545, 3], [70, 565, 3],
  ];
  return (
    <svg className="absolute h-full w-full" aria-hidden="true">
      {drops.map(([x, y, r]) => (
        <g key={`${x}-${y}`}>
          <ellipse cx={x} cy={y} rx={r} ry={r * 0.7} fill="#04295c" opacity=".35" />
          <ellipse cx={x - 1} cy={y - 1} rx={r * 0.7} ry={r * 0.4} fill="#6db4e2" opacity=".3" />
        </g>
      ))}
    </svg>
  );
}

function Taskbar() {
  return (
    <footer className="flex h-[21px] shrink-0 items-stretch border-t border-[#4b8cf5] bg-linear-to-b from-[#2f6ff0] via-[#245edb] to-[#1f50bd] text-[10px] whitespace-nowrap text-white">
      <button type="button" className="flex w-[66px] items-center gap-1 rounded-r-lg bg-linear-to-b from-[#58a858] to-[#2f8a30] pl-2 text-[12px] font-bold">
        <FlagIcon /> 시작
      </button>
      <div className="flex w-[72px] items-center gap-1 pl-2">
        <Svg size={12}><path d="M2 2h12v12H2z" fill="#e9f2fc" stroke="#4d88cc" /><path d="M5 11l6-6M5 7v4h4" stroke="#2f70c0" strokeWidth="2" fill="none" /></Svg>
        <Svg size={13}><circle cx="8" cy="6" r="5" fill="#c23a25" /><path d="M4 6h8v4l3 3H2z" fill="#f3cc7c" stroke="#79301b" /></Svg>
        <IeIcon size={13} />
        <span className="ml-auto self-start pr-1">»</span>
      </div>
      <button type="button" className="flex w-[113px] items-center gap-1 bg-[#1c4cae] pl-2">
        <PrinterFolderIcon size={12} /> 프린터 및 팩스
      </button>
      <button type="button" className="flex w-[113px] items-center gap-1 rounded-sm bg-[#3c81f3] pl-1.5">
        <IeIcon size={13} /> 프린터 - CUPS 1,3,,,
      </button>
      <div className="ml-auto flex items-center gap-1 pr-7">
        <span className="text-xs font-bold">A</span>
        <span className="text-xs font-bold">漢</span>
        <Svg size={12}><path d="M2 4l6-3 6 3-1 10H3z" fill="#c69a3b" stroke="#3a2a10" /><path d="M4 7h8M5 10h6" stroke="#fff" strokeWidth="1.500" /></Svg>
        <span className="flex h-2.5 w-2.5 items-center justify-center border border-black bg-[#fff3c4] text-black"><FiHelpCircle size={8} /></span>
        <span className="flex flex-col items-center pl-1 text-[6px] leading-[7px]"><span>❐</span><span>▾</span></span>
      </div>
      <div className="flex w-[60px] items-center gap-1 border-l border-[#0d5fc0] bg-linear-to-b from-[#1a9cf5] to-[#1187e0]">
        <span className="-ml-1.5 flex h-3 w-3 items-center justify-center rounded-full bg-[#3fb0f8] text-[9px] font-bold">‹</span>
        <time className="text-[9px]">오후 12:10</time>
      </div>
    </footer>
  );
}

export default function App() {
  return (
    <div className="flex h-screen flex-col overflow-hidden bg-black font-['Roboto','Noto_Sans_CJK_KR',sans-serif] text-black">
      <TopPanel />
      <main className="relative min-h-0 flex-1 overflow-hidden bg-[linear-gradient(100deg,rgba(2,20,80,0.7)_0%,rgba(2,20,80,0)_14%),linear-gradient(to_bottom,#0a4ea0_0%,#0d5596_30%,#2f7fb0_65%,#5a9cba_100%)]">
        <Wallpaper />

        {/* desktop items peeking out between the windows */}
        <span className="absolute top-[50px] left-[30px] text-[10px] text-white">2</span>
        <span className="absolute top-[18px] left-[268px] h-10 w-14 border-2 border-[#0b2350] bg-[#dfe8fb]" />
        <span className="absolute top-[22px] left-[164px] h-4 w-4 -rotate-12 bg-[#aeb4b8]" />
        <span className="absolute top-[548px] left-[30px] font-['DejaVu_Sans_Mono',monospace] text-[10px] font-bold text-white">USBMEMORY</span>
        <span className="absolute top-[560px] left-[157px] h-[26px] w-[60px] border-2 border-[#16324f] bg-[#e9e3bd]" />
        <span className="absolute top-[588px] left-[178px] font-['DejaVu_Sans_Mono',monospace] text-[10px] text-white">2.jpg</span>

        {/* GIMP toolbox */}
        <section className="absolute top-4 left-[34px] flex h-[534px] w-[124px] flex-col rounded-t-md border border-[#555] bg-[#444] font-['Open_Sans','Noto_Sans_CJK_KR',sans-serif] text-[10px] whitespace-nowrap text-[#ddd]">
          <div className="flex h-5 shrink-0 items-center justify-between rounded-t-md bg-[#2e2e2e] pl-1.5">
            <Svg size={11}><path d="M1 6c3-4 9-4 14 0l-2 5H5z" fill="#b9b4a8" /><circle cx="7" cy="6" r="2" fill="#fff" /></Svg>
            <h2 className="text-[#666]">김프</h2>
            <DarkCaptionButtons />
          </div>
          <nav className="flex gap-3 bg-[#383838] pl-2">
            <span>파일(F)</span>
            <span>확장(X)</span>
            <span>도움</span>
          </nav>
          <div className="mt-auto flex h-6 items-center gap-4 border-t border-[#222] pl-3">
            <Svg size={12}><path d="M2 2h12v8H2z" fill="#9fb6d8" /><path d="M4 10l4-5 4 5z" fill="#fff" /></Svg>
            <Svg size={12}><circle cx="8" cy="8" r="5" fill="#777" /></Svg>
          </div>
        </section>
        <section className="absolute top-7 left-[155px] h-80 w-[150px] rounded-t-md border border-[#555] bg-[#333] p-1.5">
          <Svg size={11}><path d="M0 3h16v10H0z" fill="#dfe3cf" /><path d="M9 3h7v10H9z" fill="#b9c68f" /></Svg>
        </section>
        <section className="absolute bottom-0 left-[193px] flex h-40 w-[108px] items-end gap-1 border-2 border-black bg-[#444] pb-1.5 pl-px">
          <div className="flex flex-col gap-px">
            <div className="h-8 w-[72px] bg-[#f00505]" />
            <div className="flex h-2.5 gap-0.5">
              <Svg size={10}><path d="M6 6h9v9H6z" fill="#fff" /><path d="M1 1h9v9H1z" fill="#000" stroke="#ddd" /></Svg>
              <span className="h-2.5 w-[72px] bg-white" />
            </div>
          </div>
          <span className="h-4 w-3 bg-white pl-1 text-[12px] leading-4 font-bold">f</span>
        </section>

        <FirefoxWindow />
        <IeWindow />
        <PrintersFolder />
        <ConnectWizard />
        <ModelWizard />
      </main>
      <Taskbar />
    </div>
  );
}
